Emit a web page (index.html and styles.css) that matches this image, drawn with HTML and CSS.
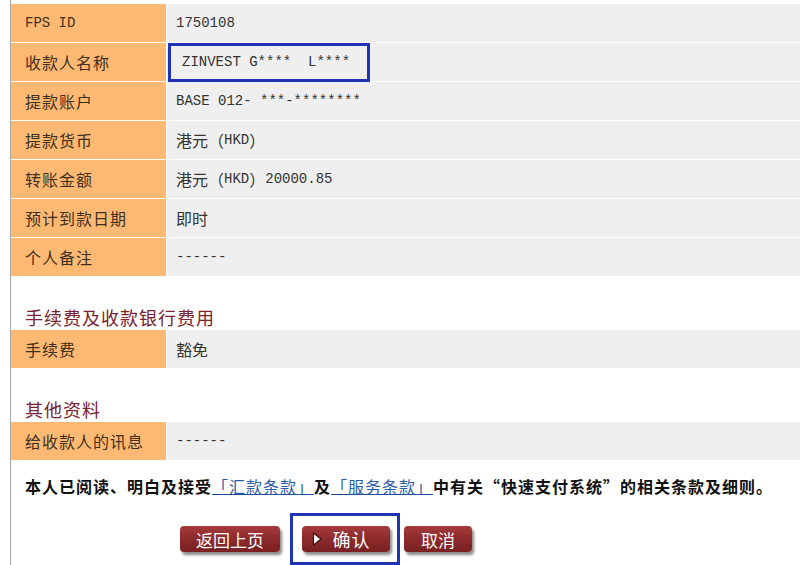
FILE: index.html
```html
<!DOCTYPE html>
<html>
<head>
    <meta charset="utf-8">
    <link rel="stylesheet" href="styles.css">
</head>
<body>
<div class="page">
    <div class="detail-table">
        <div class="row">
            <div class="label"><span class="en">FPS ID</span></div>
            <div class="value"><span class="en">1750108</span></div>
        </div>
        <div class="row">
            <div class="label">收款人名称</div>
            <div class="value"><span class="highlight en">ZINVEST G**** &nbsp;L****</span></div>
        </div>
        <div class="row">
            <div class="label">提款账户</div>
            <div class="value"><span class="en">BASE 012- ***-********</span></div>
        </div>
        <div class="row">
            <div class="label">提款货币</div>
            <div class="value">港元（<span class="en">HKD</span>）</div>
        </div>
        <div class="row">
            <div class="label">转账金额</div>
            <div class="value">港元（<span class="en">HKD</span>）<span class="en">20000.85</span></div>
        </div>
        <div class="row">
            <div class="label">预计到款日期</div>
            <div class="value">即时</div>
        </div>
        <div class="row">
            <div class="label">个人备注</div>
            <div class="value"><span class="en">------</span></div>
        </div>
    </div>

    <h3 class="section-title">手续费及收款银行费用</h3>
    <div class="detail-table">
        <div class="row">
            <div class="label">手续费</div>
            <div class="value">豁免</div>
        </div>
    </div>

    <h3 class="section-title">其他资料</h3>
    <div class="detail-table">
        <div class="row">
            <div class="label">给收款人的讯息</div>
            <div class="value"><span class="en">------</span></div>
        </div>
    </div>

    <p class="agree">本人已阅读、明白及接受<a href="#">「汇款条款」</a>及<a href="#">「服务条款」</a>中有关“快速支付系统”的相关条款及细则。</p>

    <div class="actions">
        <a href="#" class="btn btn-back">返回上页</a>
        <div class="focus-box">
            <a href="#" class="btn btn-confirm">
                <svg class="arrow" width="10" height="14" viewBox="0 0 10 14">
                    <polygon points="1.5,1 9,7 1.5,13" fill="#fff" stroke="#3a0c0c" stroke-width="1.2"/>
                </svg>
                确认
            </a>
        </div>
        <a href="#" class="btn btn-cancel">取消</a>
    </div>
</div>
</body>
</html>
```

FILE: styles.css
```css
html, body {
    margin: 0;
    padding: 0;
    background: #fff;
}

body {
    font-family: "Noto Sans CJK SC", "Liberation Serif", serif;
    font-size: 16px;
    color: #333;
}

.en {
    font-family: "Liberation Mono", monospace;
    font-size: 14px;
    letter-spacing: 0;
}

.page {
    margin-left: 10px;
    padding-top: 4px;
    border-left: 1px solid #a8a8a8;
    min-height: 561px;
}

.detail-table .row {
    display: flex;
    height: 38px;
    border-bottom: 1px solid #fff;
}

.detail-table .label {
    width: 141px;
    flex: none;
    padding-left: 14px;
    background: #ffb973;
    border-right: 1px solid #fff;
    color: #3d3020;
    letter-spacing: 1px;
    display: flex;
    align-items: center;
}

.detail-table .value {
    flex: 1;
    padding-left: 9px;
    background: #efefef;
    color: #333;
    display: flex;
    align-items: center;
}

.highlight {
    display: inline-block;
    box-sizing: border-box;
    height: 39px;
    line-height: 33px;
    margin-left: -8px;
    padding: 0 17px 0 11px;
    border: 3px solid #1f33b3;
}

.section-title {
    margin: 0;
    padding: 30px 14px 3px;
    line-height: 20px;
    font-size: 18px;
    font-weight: normal;
    letter-spacing: 1px;
    color: #7a2230;
}

.agree {
    margin: 15px 0 0;
    padding-left: 14px;
    line-height: 20px;
    font-weight: bold;
    letter-spacing: 1px;
    color: #111;
}

.agree a {
    color: #2a5ca8;
    font-weight: normal;
    text-decoration: underline;
    text-decoration-color: #1a4aa0;
}

.actions {
    display: flex;
    align-items: center;
    margin-top: 17px;
    padding-left: 169px;
}

.btn {
    display: flex;
    align-items: center;
    justify-content: center;
    box-sizing: border-box;
    height: 26px;
    border-radius: 4px;
    background: linear-gradient(#a63a3c, #8c2a2c 50%, #7a2022);
    color: #fff;
    font-size: 17px;
    text-decoration: none;
    box-shadow: 2px 3px 3px #8a8a8a;
}

.btn-back {
    width: 100px;
}

.btn-confirm {
    width: 88px;
    gap: 11px;
    padding-right: 10px;
    font-size: 18px;
    letter-spacing: 1px;
}

.btn-cancel {
    width: 68px;
    margin-left: 4px;
}

.focus-box {
    margin-left: 10px;
    padding: 10px 7px 10px 9px;
    border: 3px solid #1f33b3;
}

.arrow {
    display: block;
}
```
